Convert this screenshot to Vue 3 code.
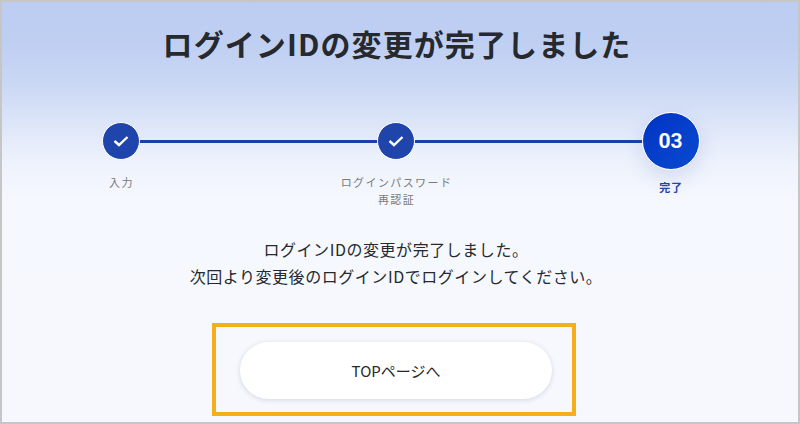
<script setup>
const steps = [
  { id: 1, label: ['入力'], done: true },
  { id: 2, label: ['ログインパスワード', '再認証'], done: true },
  { id: 3, label: ['完了'], done: false, num: '03' },
]
</script>

<template>
  <div class="frame">
    <h1 class="title">ログインIDの変更が完了しました</h1>
    <div class="stepper">
      <div class="line"></div>
      <div v-for="s in steps" :key="s.id" class="step" :class="{ current: !s.done }">
        <div class="dot-wrap">
          <div class="dot">
            <svg v-if="s.done" width="16" height="12" viewBox="0 0 16 12" fill="none">
              <path d="M1.5 6 L6 10 L14.5 2" stroke="#fff" stroke-width="2.4" />
            </svg>
            <span v-else>{{ s.num }}</span>
          </div>
        </div>
        <div class="label">
          <div v-for="l in s.label" :key="l">{{ l }}</div>
        </div>
      </div>
    </div>
    <div class="message">
      <p>ログインIDの変更が完了しました。</p>
      <p>次回より変更後のログインIDでログインしてください。</p>
    </div>
    <div class="highlight">
      <button class="btn">TOPページへ</button>
    </div>
  </div>
</template>

<style>
html, body { margin: 0; padding: 0; }
</style>

<style scoped>
.frame {
  width: 800px;
  height: 424px;
  box-sizing: border-box;
  border: 2px solid #c6c6c6;
  padding-right: 8px;
  overflow: hidden;
  display: flex;
  flex-direction: column;
  align-items: center;
  font-family: "Noto Sans CJK JP", "Noto Sans", sans-serif;
  color: #26292e;
  background: linear-gradient(180deg, #bccdf2 0, #bfcff2 40px, #c9d7f4 80px, #dce5f8 120px, #eef2fc 160px, #f5f8fe 200px, #f6f8fd 100%);
}
.title {
  margin: 19px 0 0;
  font-size: 30px;
  line-height: 44px;
  font-weight: 700;
  letter-spacing: 1.1px;
  transform: translateX(1px);
}
.stepper {
  position: relative;
  width: 664px;
  margin-top: 47px;
  margin-right: 1px;
  display: flex;
  justify-content: space-between;
}
.line {
  position: absolute;
  left: 57px;
  right: 57px;
  top: 28px;
  height: 3px;
  background: #1c3fa8;
}
.step {
  position: relative;
  width: 114px;
  display: flex;
  flex-direction: column;
  align-items: center;
}
.dot-wrap {
  height: 58px;
  display: flex;
  align-items: center;
}
.dot {
  width: 38px;
  height: 38px;
  box-sizing: border-box;
  border: 1px solid #fff;
  border-radius: 50%;
  background: #1f44ab;
  display: flex;
  align-items: center;
  justify-content: center;
}
.current .dot {
  width: 58px;
  height: 58px;
  background: linear-gradient(135deg, #0033c4, #0a4bd0);
  color: #fff;
  font-family: "Roboto", "Liberation Sans", sans-serif;
  font-size: 21px;
  font-weight: 700;
  box-shadow: 0 8px 20px rgba(40, 70, 170, 0.14);
}
.label {
  margin-top: 4px;
  padding-left: 2px;
  font-size: 11px;
  line-height: 17px;
  letter-spacing: 1.4px;
  color: #7b7b7b;
  text-align: center;
  white-space: nowrap;
}
.current .label {
  margin-top: 9px;
  padding-left: 1px;
  font-weight: 700;
  letter-spacing: 0.8px;
  color: #1f44ab;
}
.message {
  margin-top: 28px;
  font-size: 16px;
  line-height: 27px;
  letter-spacing: 0.55px;
  text-align: center;
}
.message p { margin: 0; }
.highlight {
  margin-top: 33px;
  margin-right: 4px;
  width: 364px;
  height: 93px;
  box-sizing: border-box;
  border: 4px solid #f6ae1c;
  padding: 2px 0 0 4px;
  display: flex;
  align-items: center;
  justify-content: center;
}
.btn {
  width: 312px;
  height: 57px;
  flex: none;
  border: none;
  border-radius: 29px;
  background: #fff;
  box-shadow: 0 1px 5px rgba(40, 60, 110, 0.18);
  font: inherit;
  font-size: 15px;
  color: #26292e;
}
</style>
